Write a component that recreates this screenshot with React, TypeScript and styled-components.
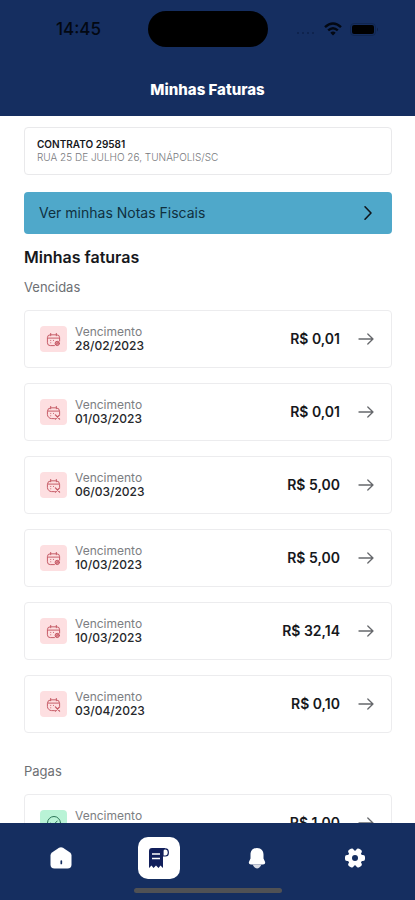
import React from "react";
import styled, { createGlobalStyle } from "styled-components";

const navy = "#152e60";

const GlobalStyle = createGlobalStyle`
  *, *::before, *::after { box-sizing: border-box; }
  body {
    margin: 0;
    background: #fff;
    color: #16181c;
    font-family: Inter, "Liberation Sans", sans-serif;
  }
  button { font: inherit; color: inherit; }
  h1, h2, h3, p, ul { margin: 0; padding: 0; }
`;

const Screen = styled.div`
  display: flex;
  flex-direction: column;
  height: 100vh;
  overflow: hidden;
`;

const Header = styled.header`
  flex: none;
  padding: 11px 32px 16px;
  background: ${navy};
`;

const StatusBar = styled.div`
  display: grid;
  grid-template-columns: 1fr 120px 1fr;
  align-items: center;
  height: 36px;
  color: #030812;
`;

const Clock = styled.time`
  padding-left: 24px;
  font-size: 17px;
  line-height: 20px;
  font-weight: 500;
`;

const Island = styled.div`
  height: 36px;
  border-radius: 18px;
  background: #000;
`;

const StatusIcons = styled.div`
  display: flex;
  align-items: center;
  justify-content: flex-end;
  gap: 8px;
  padding-right: 4px;
`;

const Title = styled.h1`
  margin-top: 33px;
  color: #fff;
  font-size: 15px;
  line-height: 20px;
  font-weight: 800;
  text-align: center;
`;

const Content = styled.main`
  flex: 1;
  min-height: 0;
  overflow: hidden;
  padding: 11px 23px 0 24px;
`;

const Contract = styled.section`
  padding: 10px 12px;
  border: 1px solid #e9e9eb;
  border-radius: 4px;
`;

const ContractName = styled.h2`
  font-size: 10px;
  line-height: 13px;
  font-weight: 600;
`;

const Address = styled.p`
  color: #77797d;
  font-size: 10px;
  line-height: 13px;
  font-weight: 300;
`;

const NotesButton = styled.button`
  display: flex;
  align-items: center;
  justify-content: space-between;
  width: 100%;
  height: 42px;
  margin-top: 17px;
  padding: 0 17px 0 15px;
  border: 0;
  border-radius: 4px;
  background: #4fa8ca;
  color: #10303f;
  font-size: 14px;
  line-height: 18px;
`;

const Heading = styled.h2`
  margin-top: 13px;
  font-size: 16px;
  line-height: 20px;
  font-weight: 600;
`;

const GroupTitle = styled.h3<{ $spaced?: boolean }>`
  margin-top: ${(p) => (p.$spaced ? 29 : 11)}px;
  color: #6d6f73;
  font-size: 13px;
  line-height: 18px;
  font-weight: 400;
`;

const InvoiceList = styled.ul`
  display: grid;
  gap: 15px;
  margin-top: 14px;
  list-style: none;
`;

const InvoiceCard = styled.button`
  display: flex;
  align-items: center;
  width: 100%;
  height: 58px;
  padding: 0 17px 0 15px;
  border: 1px solid #ececee;
  border-radius: 4px;
  background: #fff;
  text-align: left;
`;

const Badge = styled.span<{ $paid?: boolean }>`
  display: grid;
  place-items: center;
  width: 27px;
  height: 26px;
  border-radius: 4px;
  background: ${(p) => (p.$paid ? "#b9f3d6" : "#fddfe1")};
  color: ${(p) => (p.$paid ? "#2c7457" : "#c35561")};
`;

const Due = styled.span`
  display: grid;
  flex: 1;
  margin-left: 8px;
  font-size: 12px;
  line-height: 14px;
`;

const DueLabel = styled.span`
  color: #7c7e82;
`;

const DueDate = styled.time`
  color: #26282c;
  font-weight: 500;
`;

const Amount = styled.span`
  margin-right: 18px;
  font-size: 14px;
  line-height: 18px;
  font-weight: 600;
`;

const Arrow = styled.svg`
  color: #66686c;
`;

const BottomBar = styled.footer`
  flex: none;
  height: 77px;
  padding: 14px 11px 7px 12px;
  background: ${navy};
`;

const Tabs = styled.nav`
  display: grid;
  grid-template-columns: repeat(4, 1fr);
  justify-items: center;
`;

const Tab = styled.button<{ $active?: boolean }>`
  display: grid;
  place-items: center;
  width: 42px;
  height: 42px;
  padding: 0;
  border: 0;
  border-radius: 10px;
  background: ${(p) => (p.$active ? "#fff" : "transparent")};
  color: ${(p) => (p.$active ? "#111f5b" : "#fff")};
`;

const HomeIndicator = styled.div`
  width: 148px;
  height: 5px;
  margin: 9px auto 0;
  border-radius: 3px;
  background: #505154;
`;

function CalendarIcon({ crossed }: { crossed: boolean }) {
  return (
    <svg width="15" height="15" viewBox="0 0 16 16" fill="none" stroke="currentColor" strokeLinecap="round" strokeLinejoin="round" aria-hidden="true">
      <path d={crossed
        ? "M9 14.500H6A4.500 4.500 0 0 1 1.500 10V7A4 4 0 0 1 5.500 3H10.500A4 4 0 0 1 14.500 7V9.500"
        : "M9 14.500H4.500A3 3 0 0 1 1.500 11.500V6A3 3 0 0 1 4.500 3H11.500A3 3 0 0 1 14.500 6V9.500"} />
      <path d="M5 1.500V4M11 1.500V4M2 6.500H14" />
      <path d="M5 9H5.100M8 9H8.100M5 11.500H5.100" />
      {crossed ? (
        <path d="M10 10.500L14.500 15M14.500 10.500L10 15" strokeWidth="1.300" />
      ) : (
        <>
          <circle cx="12" cy="12.200" r="2.300" fill="#dd8f97" />
          <path d="M10.500 13.500L13.500 10.500" />
        </>
      )}
    </svg>
  );
}

function CheckIcon() {
  return (
    <svg width="16" height="16" viewBox="0 0 16 16" fill="none" stroke="currentColor" strokeLinecap="round" strokeLinejoin="round" aria-hidden="true">
      <circle cx="8" cy="8" r="6.500" />
      <path d="M5 8L7.200 10.200L11.200 6" />
    </svg>
  );
}

type InvoiceData = { date: string; amount: string; paid?: boolean; crossed?: boolean };

const overdue: InvoiceData[] = [
  { date: "28/02/2023", amount: "R$ 0,01" },
  { date: "01/03/2023", amount: "R$ 0,01", crossed: true },
  { date: "06/03/2023", amount: "R$ 5,00", crossed: true },
  { date: "10/03/2023", amount: "R$ 5,00" },
  { date: "10/03/2023", amount: "R$ 32,14" },
  { date: "03/04/2023", amount: "R$ 0,10", crossed: true },
];

const paid: InvoiceData[] = [{ date: "", amount: "R$ 1,00", paid: true }];

function Invoice({ date, amount, paid: isPaid, crossed }: InvoiceData) {
  return (
    <li>
      <InvoiceCard type="button">
        <Badge $paid={isPaid}>{isPaid ? <CheckIcon /> : <CalendarIcon crossed={!!crossed} />}</Badge>
        <Due>
          <DueLabel>Vencimento</DueLabel>
          <DueDate>{date || "\u00a0"}</DueDate>
        </Due>
        <Amount>{amount}</Amount>
        <Arrow width="16" height="14" viewBox="0 0 16 14" fill="none" stroke="currentColor" strokeWidth="1.300" strokeLinecap="round" strokeLinejoin="round" aria-hidden="true">
          <path d="M1 7H15M9.800 2L15 7L9.800 12" />
        </Arrow>
      </InvoiceCard>
    </li>
  );
}

export default function App() {
  return (
    <>
      <GlobalStyle />
      <Screen>
        <Header>
          <StatusBar>
            <Clock>14:45</Clock>
            <Island />
            <StatusIcons>
              <svg width="20" height="12" viewBox="0 0 20 12" fill="#0d2048" aria-hidden="true">
                <circle cx="2" cy="10" r="1" /><circle cx="7" cy="10" r="1" /><circle cx="12" cy="10" r="1" /><circle cx="17" cy="10" r="1" />
              </svg>
              <svg width="18" height="14" viewBox="0 0 18 14" fill="none" stroke="currentColor" strokeWidth="2.400" aria-hidden="true">
                <path d="M1 5.200Q9-2.200 17 5.200M4.200 8.400Q9 4 13.800 8.400" />
                <path d="M9 13.500L6.300 10.800Q9 8.400 11.700 10.800Z" fill="currentColor" stroke="none" />
              </svg>
              <svg width="29" height="13" viewBox="0 0 29 13" aria-hidden="true">
                <rect x=".5" y=".5" width="25" height="12" rx="3.500" fill="none" stroke="#11264f" />
                <rect x="2" y="2" width="22" height="9" rx="2" fill="#000" />
                <path d="M27 4.500Q29 6.500 27 8.500Z" fill="#0e2046" />
              </svg>
            </StatusIcons>
          </StatusBar>
          <Title>Minhas Faturas</Title>
        </Header>
        <Content>
          <Contract>
            <ContractName>CONTRATO 29581</ContractName>
            <Address>RUA 25 DE JULHO 26, TUNÁPOLIS/SC</Address>
          </Contract>
          <NotesButton type="button">
            Ver minhas Notas Fiscais
            <svg width="14" height="16" viewBox="0 0 14 16" fill="none" stroke="#10161c" strokeWidth="1.600" strokeLinecap="round" strokeLinejoin="round" aria-hidden="true">
              <path d="M4 1.800L10 8L4 14.200" />
            </svg>
          </NotesButton>
          <Heading>Minhas faturas</Heading>
          <GroupTitle>Vencidas</GroupTitle>
          <InvoiceList>{overdue.map((item, i) => <Invoice key={i} {...item} />)}</InvoiceList>
          <GroupTitle $spaced>Pagas</GroupTitle>
          <InvoiceList>{paid.map((item, i) => <Invoice key={i} {...item} />)}</InvoiceList>
        </Content>
        <BottomBar>
          <Tabs>
            <Tab type="button" aria-label="Início">
              <svg width="22" height="24" viewBox="0 0 22 24" aria-hidden="true">
                <path d="M9 1.800Q11 .6 13 1.800L20 6.500Q21.500 7.600 21.500 9.500V18.500Q21.500 22.500 17.500 22.500H4.500Q.5 22.500 .5 18.500V9.500Q.5 7.600 2 6.500Z" fill="currentColor" />
                <path d="M11.300 15V17.500" stroke={navy} strokeWidth="1.700" strokeLinecap="round" />
              </svg>
            </Tab>
            <Tab type="button" $active aria-label="Faturas" aria-current="page">
              <svg width="20" height="20" viewBox="0 0 20 20" aria-hidden="true">
                <path d="M3 0H16V8H14V20L11.500 17.500L9.500 20L7 17.500L4.500 20L2.500 17.500L0 20V3Q0 0 3 0Z" fill="currentColor" />
                <path d="M14 8V3Q14 .8 16.500 .8Q19.300 .8 19.300 4V5Q19.300 8 16.500 8Z" fill="#fff" stroke="currentColor" strokeWidth="1.200" />
                <path d="M3 6H11M3 10.500H11" stroke="#fff" strokeWidth="1.500" />
              </svg>
            </Tab>
            <Tab type="button" aria-label="Notificações">
              <svg width="18" height="22" viewBox="0 0 18 22" aria-hidden="true">
                <path d="M9 1C4.500 1 2.500 4 2.500 7.500V11.500L1 14.800Q.2 17.500 3 17.500H15Q17.800 17.500 17 14.800L15.500 11.500V7.500C15.500 4 13.500 1 9 1Z" fill="currentColor" />
                <path d="M4.500 17.500H13.500Q11.500 21.500 9 21.500Q6.500 21.500 4.500 17.500Z" fill="#d9dce5" />
              </svg>
            </Tab>
            <Tab type="button" aria-label="Configurações">
              <svg width="22" height="22" viewBox="0 0 22 22" aria-hidden="true">
                <g fill="currentColor">
                  <circle cx="11" cy="11" r="7.500" />
                  {[30, 90, 150].map((angle) => (
                    <rect key={angle} x="8" y="1" width="6" height="20" rx="2" transform={`rotate(${angle} 11 11)`} />
                  ))}
                </g>
                <circle cx="11" cy="11" r="3" fill={navy} />
              </svg>
            </Tab>
          </Tabs>
          <HomeIndicator />
        </BottomBar>
      </Screen>
    </>
  );
}
